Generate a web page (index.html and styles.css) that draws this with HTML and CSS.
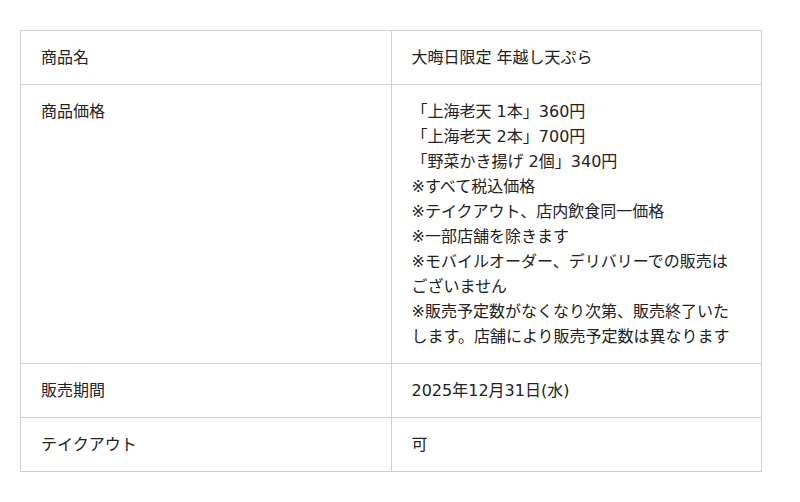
FILE: index.html
```html
<!DOCTYPE html>
<html lang="ja">
<head>
<meta charset="utf-8">
<link rel="stylesheet" href="styles.css">
</head>
<body>
<div class="page">
<table class="spec">
<tr><th>商品名</th><td>大晦日限定 年越し天ぷら</td></tr>
<tr><th>商品価格</th><td>「上海老天 1本」360円<br>「上海老天 2本」700円<br>「野菜かき揚げ 2個」340円<br>※すべて税込価格<br>※テイクアウト、店内飲食同一価格<br>※一部店舗を除きます<br>※モバイルオーダー、デリバリーでの販売はございません<br>※販売予定数がなくなり次第、販売終了いたします。店舗により販売予定数は異なります</td></tr>
<tr><th>販売期間</th><td>2025年12月31日(水)</td></tr>
<tr><th>テイクアウト</th><td>可</td></tr>
</table>
</div>
</body>
</html>
```
FILE: styles.css
```css
html, body { margin: 0; padding: 0; background: #fff; }
.page { padding: 30px 0 0 20px; }
.spec {
  width: 742px;
  border-collapse: collapse;
  table-layout: fixed;
  font-family: "DejaVu Sans", "Noto Sans CJK JP", sans-serif;
  font-size: 16px;
  line-height: 25px;
  color: #222;
}
.spec th, .spec td {
  border: 1px solid #d0d0d0;
  padding: 14px 20px;
  text-align: left;
  vertical-align: top;
  font-weight: normal;
  width: 50%;
}
```
